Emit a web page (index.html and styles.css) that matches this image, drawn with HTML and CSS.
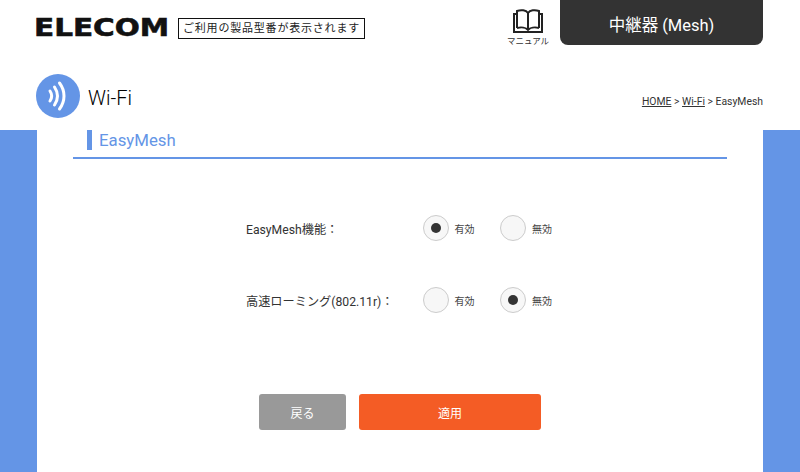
FILE: index.html
```html
<!DOCTYPE html>
<html lang="ja">
<head>
    <meta charset="UTF-8">
    <meta name="viewport" content="width=device-width, initial-scale=1.0">
    <title>EasyMesh</title>
    <link rel="stylesheet" href="styles.css">
</head>
<body>
    <!-- ヘッダー -->
    <header class="top">
        <div class="top-left">
            <span class="logo"><span class="logo-text">ELECOM</span></span>
            <span class="model">ご利用の製品型番が表示されます</span>
        </div>
        <div class="top-right">
            <a class="manual">
                <svg class="manual-icon" width="30" height="26" viewBox="0 0 30 26" fill="none" stroke="#222" stroke-width="2">
                    <path d="M4 20V3C8 1.500 13 2 15 5C17 2 22 1.500 26 3V20"/>
                    <path d="M4 20C8 19 13 19.500 15 22C17 19.500 22 19 26 20"/>
                    <path d="M15 5V22"/>
                    <path d="M4 6H1V24H29V6H26"/>
                </svg>
                <span class="manual-label">マニュアル</span>
            </a>
            <div class="mode-tab">中継器 (Mesh)</div>
        </div>
    </header>

    <!-- ページタイトル -->
    <div class="page-head">
        <div class="page-title">
            <span class="page-icon">
                <svg width="44" height="44" viewBox="0 0 44 44" fill="none" stroke="#fff" stroke-width="3" stroke-linecap="round">
                    <path d="M14 17C16 20 16 24 14 27"/>
                    <path d="M18.500 13C22.500 19 22.500 25 18.500 31"/>
                    <path d="M23.500 9C29.500 17 29.500 27 23.500 35"/>
                </svg>
            </span>
            <span class="page-name">Wi-Fi</span>
        </div>
        <div class="crumbs"><a>HOME</a> &gt; <a>Wi-Fi</a> &gt; EasyMesh</div>
    </div>

    <!-- メイン -->
    <div class="band">
        <main class="sheet">
            <h2 class="section-title"><span class="section-bar"></span>EasyMesh</h2>

            <form class="settings">
                <div class="row">
                    <div class="row-label">EasyMesh機能：</div>
                    <div class="choice"><span class="radio on"></span><span class="choice-text">有効</span></div>
                    <div class="choice"><span class="radio"></span><span class="choice-text">無効</span></div>
                </div>
                <div class="row">
                    <div class="row-label">高速ローミング(802.11r)：</div>
                    <div class="choice"><span class="radio"></span><span class="choice-text">有効</span></div>
                    <div class="choice"><span class="radio on"></span><span class="choice-text">無効</span></div>
                </div>
            </form>

            <div class="actions">
                <button type="button" class="btn btn-back">戻る</button>
                <button type="button" class="btn btn-apply">適用</button>
            </div>
        </main>
    </div>
</body>
</html>
```

FILE: styles.css
```css
/* 基本 */
body {
    margin: 0;
    height: 472px;
    overflow: hidden;
    display: flex;
    flex-direction: column;
    background-color: #fff;
    color: #333;
    font-family: Roboto, "Noto Sans CJK JP", sans-serif;
}

/* ヘッダー */
.top {
    height: 46px;
    padding: 0 37px 0 36px;
    display: flex;
    justify-content: space-between;
    align-items: flex-start;
}

.top-left {
    display: flex;
    align-items: center;
    height: 56px;
}

.logo {
    width: 132px;
    margin-right: 10px;
}

.logo-text {
    display: block;
    font-family: "DejaVu Sans", sans-serif;
    font-weight: 700;
    font-size: 25px;
    line-height: 22px;
    color: #111;
    -webkit-text-stroke: 0.6px #111;
    transform: scaleX(1.18);
    transform-origin: left center;
    margin-left: -2px;
}

.model {
    box-sizing: border-box;
    width: 187px;
    height: 21px;
    border: 1px solid #111;
    font-size: 11px;
    line-height: 19px;
    letter-spacing: 0.8px;
    text-align: center;
    white-space: nowrap;
    color: #222;
}

.top-right {
    display: flex;
    align-items: flex-start;
}

.manual {
    width: 60px;
    margin-right: 2px;
    padding-top: 8px;
    display: flex;
    flex-direction: column;
    align-items: center;
}

.manual-label {
    font-size: 8.500px;
    line-height: 12px;
    margin-top: 1px;
    color: #333;
    white-space: nowrap;
}

.mode-tab {
    width: 203px;
    height: 45px;
    border-radius: 0 0 8px 8px;
    background-color: #333;
    color: #fff;
    font-size: 16.500px;
    line-height: 52px;
    text-align: center;
}

/* ページタイトル */
.page-head {
    height: 84px;
    padding: 0 37px 0 36px;
    display: flex;
    justify-content: space-between;
    align-items: flex-start;
}

.page-title {
    display: flex;
    align-items: center;
    margin-top: 28px;
}

.page-icon {
    width: 44px;
    height: 44px;
    border-radius: 50%;
    background-color: #6495e6;
    display: block;
}

.page-name {
    margin: 4px 0 0 8px;
    font-size: 20px;
    font-weight: 300;
    color: #000;
}

.crumbs {
    margin-top: 49px;
    font-size: 10.400px;
    line-height: 14px;
    color: #333;
}

.crumbs a {
    text-decoration: underline;
}

/* メイン */
.band {
    flex: 1;
    padding: 0 37px;
    background-color: #6495e6;
}

.sheet {
    height: 100%;
    padding: 0 36px;
    background-color: #fff;
}

.section-title {
    margin: 0;
    height: 27px;
    padding-left: 14px;
    border-bottom: 2px solid #6495e6;
    display: flex;
    align-items: flex-start;
    font-size: 16.800px;
    font-weight: 400;
    line-height: 21px;
    color: #6495e6;
}

.section-bar {
    width: 5px;
    height: 20px;
    margin-right: 7px;
    background-color: #6495e6;
}

.settings {
    margin-top: 56px;
    padding-left: 173px;
}

.row {
    height: 26px;
    margin-bottom: 46px;
    display: flex;
    align-items: center;
}

.row-label {
    width: 176.500px;
    padding-top: 1px;
    font-size: 12.200px;
    white-space: nowrap;
}

.choice {
    width: 77.500px;
    display: flex;
    align-items: center;
}

.radio {
    box-sizing: border-box;
    width: 26px;
    height: 26px;
    border: 1px solid #ccc;
    border-radius: 50%;
    background-color: #f7f7f7;
    display: flex;
    align-items: center;
    justify-content: center;
}

.radio.on::after {
    content: "";
    width: 10px;
    height: 10px;
    border-radius: 50%;
    background-color: #333;
}

.choice-text {
    margin-left: 6px;
    font-size: 10px;
    color: #444;
}

.actions {
    margin-top: 81px;
    padding-left: 186px;
    display: flex;
    gap: 13px;
}

.btn {
    height: 36px;
    border: none;
    border-radius: 3px;
    color: #fff;
    font-family: inherit;
    font-size: 12px;
    padding: 0;
}

.btn-back {
    width: 87px;
    background-color: #999;
}

.btn-apply {
    width: 182px;
    background-color: #f45c25;
}
```
